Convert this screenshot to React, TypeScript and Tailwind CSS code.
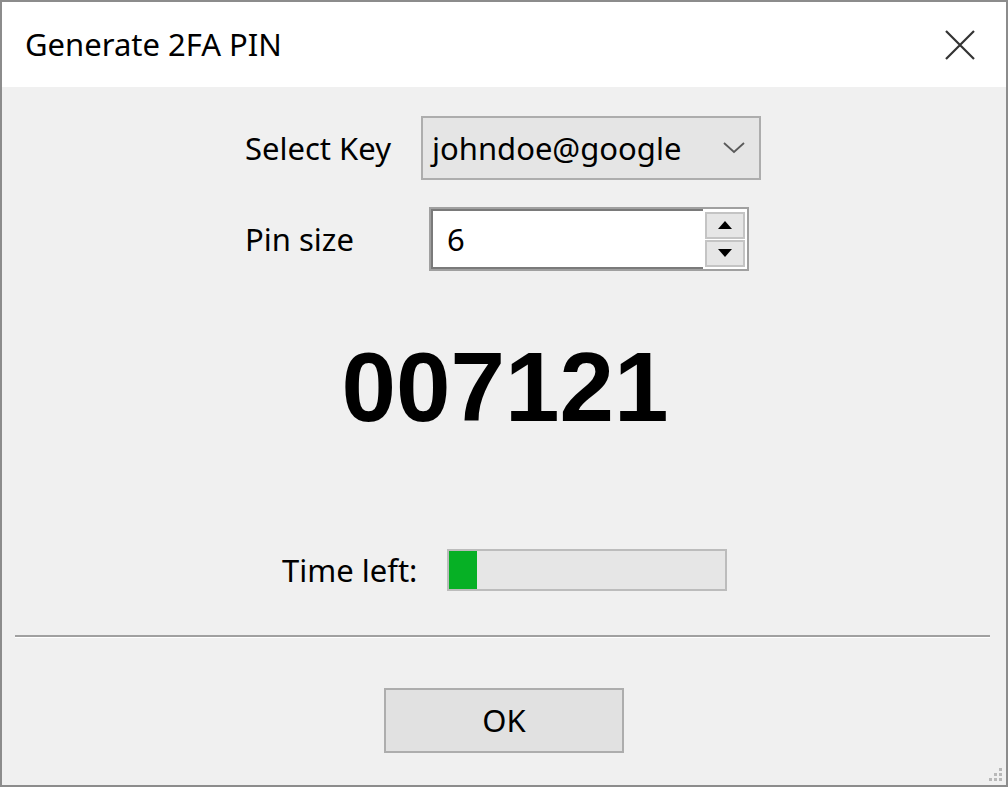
import { useState } from 'react';

const ui = { fontFamily: '"Noto Sans", "Open Sans", sans-serif' };

function ChevronDown() {
  return (
    <svg width="22" height="12" viewBox="0 0 22 12" fill="none">
      <path d="M1 1 L11 10 L21 1" stroke="#5a5a5a" strokeWidth="1.8" />
    </svg>
  );
}

function SpinButton({ up }: { up: boolean }) {
  return (
    <div className="flex h-[27px] w-[40px] items-center justify-center border-2 border-[#c4c4c4] bg-[#e6e6e6]">
      <svg width="14" height="8" viewBox="0 0 14 8">
        {up ? <polygon points="7,0 14,8 0,8" fill="#000" /> : <polygon points="0,0 14,0 7,8" fill="#000" />}
      </svg>
    </div>
  );
}

export default function App() {
  const [pinSize] = useState(6);
  const progress = 10;

  return (
    <div className="relative flex h-[787px] w-[1008px] flex-col border-2 border-[#8c8c8c] bg-[#f0f0f0] text-black" style={ui}>
      {/* title bar */}
      <div className="flex h-[85px] items-center justify-between bg-white pl-[23px] pr-[31px]">
        <span className="text-[31px] leading-none">Generate 2FA PIN</span>
        <svg width="30" height="30" viewBox="0 0 30 30">
          <path d="M1 1 L29 29 M29 1 L1 29" stroke="#333" strokeWidth="2.2" />
        </svg>
      </div>

      {/* form */}
      <div className="mt-[29px] flex h-[64px] items-center pl-[243px]">
        <span className="w-[176px] text-[31px]">Select Key</span>
        <div className="flex h-[64px] w-[340px] items-center justify-between border-2 border-[#adadad] bg-[#e5e5e5] pl-[9px] pr-[14px]">
          <span className="text-[31px]">johndoe@google</span>
          <ChevronDown />
        </div>
      </div>

      <div className="mt-[27px] flex h-[64px] items-center pl-[243px]">
        <span className="w-[184px] text-[31px]">Pin size</span>
        <div className="flex h-[64px] w-[320px] border-2 border-[#a0a0a0] bg-white">
          <div className="flex flex-1 items-center pl-[16px] text-[31px] shadow-[inset_2px_2px_0_#7a7a7a,inset_0_-2px_0_#7a7a7a]">{pinSize}</div>
          <div className="flex flex-col justify-center gap-[1px] bg-white px-[2px]">
            <SpinButton up />
            <SpinButton up={false} />
          </div>
        </div>
      </div>

      {/* pin */}
      <div
        className="mt-[67px] h-[99px] pl-[2px] text-center text-[98px] font-bold leading-none"
        style={{ fontFamily: '"Liberation Sans", Arial, sans-serif' }}
      >
        007121
      </div>

      {/* time left */}
      <div className="mt-[112px] flex h-[42px] items-center pl-[280px]">
        <span className="w-[165px] text-[31px]">Time left:</span>
        <div className="h-[42px] w-[280px] border-2 border-[#bcbcbc] bg-[#e6e6e6]">
          <div className="h-full bg-[#06b025]" style={{ width: `${progress}%` }} />
        </div>
      </div>

      {/* separator */}
      <div className="ml-[13px] mr-[16px] mt-[44px] h-[3px] border-t-2 border-[#a0a0a0] bg-white" />

      {/* button */}
      <div className="mt-[50px] flex justify-center">
        <button className="h-[65px] w-[240px] border-2 border-[#adadad] bg-[#e1e1e1] text-[31px]">OK</button>
      </div>

      {/* resize grip */}
      <div className="absolute bottom-[4px] right-[4px] grid grid-cols-3 gap-[2px]">
        <span className="h-[3px] w-[3px]" />
        <span className="h-[3px] w-[3px]" />
        <span className="h-[3px] w-[3px] bg-[#b8b8b8]" />
        <span className="h-[3px] w-[3px]" />
        <span className="h-[3px] w-[3px] bg-[#b8b8b8]" />
        <span className="h-[3px] w-[3px] bg-[#b8b8b8]" />
        <span className="h-[3px] w-[3px] bg-[#b8b8b8]" />
        <span className="h-[3px] w-[3px] bg-[#b8b8b8]" />
        <span className="h-[3px] w-[3px] bg-[#b8b8b8]" />
      </div>
    </div>
  );
}
